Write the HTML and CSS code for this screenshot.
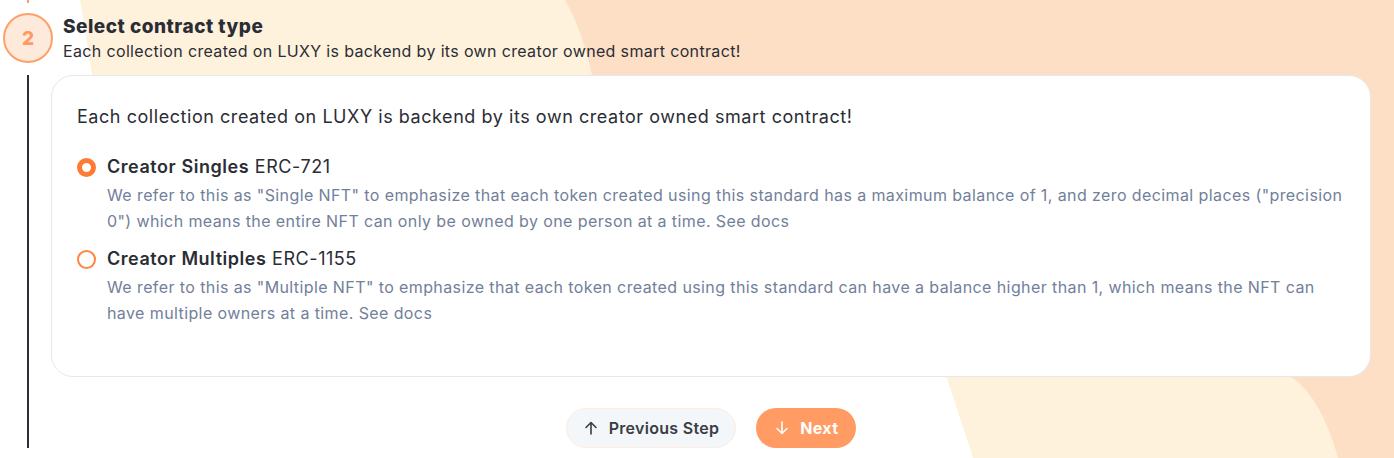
FILE: index.html
```html
<!DOCTYPE html>
<html lang="en">
<head>
<meta charset="utf-8">
<title>Select contract type</title>
<link rel="stylesheet" href="styles.css">
</head>
<body>
<div class="page">
  <svg class="bg" width="1394" height="458" viewBox="0 0 1394 458" aria-hidden="true">
    <path class="bg-cream" d="M80 0 L1394 0 L1394 458 L973 458 L947 378 L400 230 Q110 160 92 75 Q86 35 80 0 Z"/>
    <path class="bg-orange" d="M565 0 L1394 0 L1394 458 L1338 458 Q1322 400 1293 378 L760 220 Q610 160 592 75 Q582 30 565 0 Z"/>
  </svg>

  <div class="prev-line"></div>

  <header class="step-head">
    <div class="step-num">2</div>
    <div class="step-titles">
      <h2 class="step-title">Select contract type</h2>
      <p class="step-sub">Each collection created on LUXY is backend by its own creator owned smart contract!</p>
    </div>
  </header>

  <div class="step-body">
    <div class="rail"><span class="rail-line"></span></div>
    <div class="main">
      <section class="card">
        <p class="intro">Each collection created on LUXY is backend by its own creator owned smart contract!</p>

        <div class="option">
          <span class="radio radio-on"></span>
          <div class="option-text">
            <div class="option-title"><strong>Creator Singles</strong> ERC-721</div>
            <p class="option-desc">We refer to this as "Single NFT" to emphasize that each token created using this standard has a maximum balance of 1, and zero decimal places ("precision 0") which means the entire NFT can only be owned by one person at a time. See docs</p>
          </div>
        </div>

        <div class="option">
          <span class="radio"></span>
          <div class="option-text">
            <div class="option-title"><strong>Creator Multiples</strong> ERC-1155</div>
            <p class="option-desc">We refer to this as "Multiple NFT" to emphasize that each token created using this standard can have a balance higher than 1, which means the NFT can have multiple owners at a time. See docs</p>
          </div>
        </div>
      </section>

      <div class="actions">
        <button class="btn btn-prev" type="button">
          <svg class="btn-icon" width="16" height="16" viewBox="0 0 16 16"><path d="M8 14V2.5M3 7.5L8 2.5L13 7.5" fill="none" stroke="currentColor" stroke-width="1.6" stroke-linecap="round" stroke-linejoin="round"/></svg>
          Previous Step
        </button>
        <button class="btn btn-next" type="button">
          <svg class="btn-icon" width="16" height="16" viewBox="0 0 16 16"><path d="M8 2V13.5M3 8.5L8 13.5L13 8.5" fill="none" stroke="currentColor" stroke-width="1.6" stroke-linecap="round" stroke-linejoin="round"/></svg>
          Next
        </button>
      </div>
    </div>
  </div>
</div>
</body>
</html>
```

FILE: styles.css
```css
* { box-sizing: border-box; }

html, body {
  margin: 0;
  padding: 0;
  background: #ffffff;
}

body {
  font-family: "Inter", "Noto Sans", sans-serif;
  color: #2c2e35;
}

.page {
  position: relative;
  width: 1394px;
  height: 458px;
  overflow: hidden;
  background: #ffffff;
}

.bg {
  position: absolute;
  left: 0;
  top: 0;
  z-index: 0;
}

.bg-cream { fill: #fef2dd; }
.bg-orange { fill: #fddfc6; }

.prev-line,
.step-head,
.step-body {
  position: relative;
  z-index: 1;
}

.prev-line {
  width: 2px;
  height: 3px;
  margin-left: 27px;
  background: #ff9a62;
}

.step-head {
  display: flex;
  align-items: flex-start;
  gap: 10px;
  margin-top: 10px;
  padding-left: 3px;
  height: 50px;
}

.step-num {
  width: 50px;
  height: 50px;
  flex: none;
  border-radius: 50%;
  border: 2px solid #ffa06b;
  background: #feeadb;
  color: #ff9a62;
  font-weight: 800;
  font-size: 19px;
  display: flex;
  align-items: center;
  justify-content: center;
}

.step-titles { padding-top: 2px; }

.step-title {
  margin: 0;
  font-size: 19px;
  line-height: 24px;
  font-weight: 800;
  letter-spacing: 0.5px;
  color: #2b2d34;
}

.step-sub {
  margin: 2px 0 0;
  font-size: 16px;
  line-height: 20px;
  letter-spacing: 0.35px;
  color: #2b2d34;
}

.step-body {
  display: flex;
  margin-top: 12px;
}

.rail {
  width: 51px;
  flex: none;
  display: flex;
}

.rail-line {
  width: 2px;
  margin-left: 27px;
  background: #2d2f36;
}

.main {
  flex: 1;
  margin-right: 23px;
  display: flex;
  flex-direction: column;
}

.card {
  height: 302px;
  background: #ffffff;
  border: 1px solid #e6e8ec;
  border-radius: 22px;
  padding: 27px 25px 0;
}

.intro {
  margin: 0 0 22px;
  font-size: 18px;
  line-height: 28px;
  letter-spacing: 0.55px;
  color: #2b2d34;
}

.option {
  display: flex;
  align-items: flex-start;
  gap: 11px;
  margin-bottom: 11px;
}

.radio {
  width: 19px;
  height: 19px;
  flex: none;
  margin-top: 5px;
  border-radius: 50%;
  border: 2px solid #ff8540;
  background: #ffffff;
}

.radio-on {
  border: 5px solid #ff7a33;
}

.option-title {
  font-size: 18px;
  line-height: 28px;
  letter-spacing: 0.55px;
  color: #2b2d34;
}

.option-title strong { font-weight: 600; }

.option-desc {
  margin: 2px 0 0;
  font-size: 16px;
  line-height: 25.5px;
  letter-spacing: 0.4px;
  color: #72809a;
}

.actions {
  display: flex;
  justify-content: center;
  gap: 20px;
  margin-top: 31px;
}

.btn {
  height: 40px;
  border-radius: 20px;
  display: inline-flex;
  align-items: center;
  gap: 10px;
  font-family: inherit;
  font-size: 16px;
  font-weight: 600;
  letter-spacing: 0.3px;
  cursor: pointer;
}

.btn-prev {
  padding: 0 16px;
  background: #f4f7fa;
  border: 1px solid #fdeee2;
  color: #3a3d45;
}

.btn-next {
  padding: 0 18px;
  background: #ff9b63;
  border: none;
  color: #ffffff;
  font-weight: 700;
}

.btn-icon { flex: none; }
```
